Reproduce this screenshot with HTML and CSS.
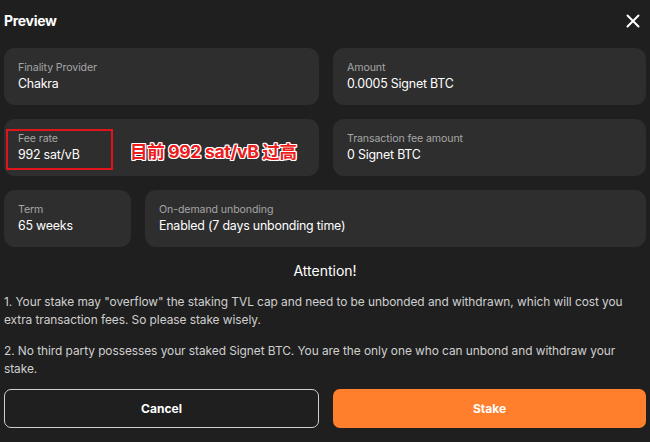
FILE: index.html
```html
<!DOCTYPE html>
<html lang="en">
<head>
<meta charset="utf-8">
<link rel="stylesheet" href="styles.css">
</head>
<body>
<div class="modal">
  <div class="header">
    <h1 class="title">Preview</h1>
    <button class="close" aria-label="Close">
      <svg width="14" height="14" viewBox="0 0 14 14"><path d="M1.5 1.5L12.5 12.5M12.5 1.5L1.5 12.5" stroke="#fff" stroke-width="2" stroke-linecap="round"/></svg>
    </button>
  </div>
  <div class="grid">
    <div class="card"><div class="label">Finality Provider</div><div class="value">Chakra</div></div>
    <div class="card"><div class="label">Amount</div><div class="value">0.0005 Signet BTC</div></div>
    <div class="card fee">
      <div class="label">Fee rate</div><div class="value">992 sat/vB</div>
      <div class="mark"></div>
      <div class="note">目前 992 sat/vB 过高</div>
    </div>
    <div class="card"><div class="label">Transaction fee amount</div><div class="value">0 Signet BTC</div></div>
    <div class="row3">
      <div class="card term"><div class="label">Term</div><div class="value">65 weeks</div></div>
      <div class="card grow"><div class="label">On-demand unbonding</div><div class="value">Enabled (7 days unbonding time)</div></div>
    </div>
  </div>
  <h2 class="attention">Attention!</h2>
  <p class="text">1. Your stake may "overflow" the staking TVL cap and need to be unbonded and withdrawn, which will cost you extra transaction fees. So please stake wisely.</p>
  <p class="text">2. No third party possesses your staked Signet BTC. You are the only one who can unbond and withdraw your stake.</p>
  <div class="actions">
    <button class="btn cancel">Cancel</button>
    <button class="btn stake">Stake</button>
  </div>
</div>
</body>
</html>
```
FILE: styles.css
```css
* { box-sizing: border-box; }
html, body { margin: 0; padding: 0; background: #1f1f1f; }
body { font-family: Inter, "Noto Sans CJK SC", sans-serif; color: #fff; }
.modal { padding: 0 4px; width: 650px; height: 442px; }
.header { height: 40px; display: flex; align-items: center; justify-content: space-between; padding-top: 1px; }
.title { margin: 0; font-size: 14px; font-weight: 700; letter-spacing: -0.3px; }
.close { background: none; border: 0; padding: 0; margin-right: 6px; width: 14px; height: 14px; display: flex; }
.grid { margin-top: 8px; display: grid; grid-template-columns: 315px 313px; column-gap: 14px; row-gap: 14px; }
.card { background: #2e2e2e; border-radius: 11px; height: 57px; padding: 13px 14px 0; position: relative; }
.row3 { grid-column: 1 / 3; display: flex; gap: 14px; }
.term { width: 127px; }
.grow { flex: 1; }
.label { font-size: 10.6px; color: #a6a6a6; line-height: 14px; letter-spacing: -0.1px; }
.value { font-size: 12.4px; line-height: 18px; margin-top: 0; color: #fff; letter-spacing: -0.2px; }
.mark { position: absolute; left: 2px; top: 10px; width: 107px; height: 41px; border: 2.5px solid #e0141a; }
.note { position: absolute; left: 126px; top: 22px; font-size: 17.5px; font-weight: 700; color: #ee1c1c; letter-spacing: -0.3px; text-shadow: 1px 0 0 #fff, -1px 0 0 #fff, 0 1px 0 #fff, 0 -1px 0 #fff, 1px 1px 0 #fff, -1px -1px 0 #fff, 1px -1px 0 #fff, -1px 1px 0 #fff; line-height: 22px; }
.attention { margin: 14px 0 0; text-align: center; font-size: 14px; font-weight: 400; line-height: 20px; }
.text { margin: 12px 0 0; font-size: 11.9px; line-height: 18px; color: #cfcfcf; letter-spacing: -0.05px; }
.text + .text { margin-top: 13px; }
.actions { margin-top: 11px; display: grid; grid-template-columns: 315px 313px; column-gap: 14px; }
.btn { height: 39px; border-radius: 7px; font-family: Inter, sans-serif; font-size: 12px; font-weight: 700; color: #fff; }
.cancel { background: transparent; border: 1.5px solid #cfcfcf; }
.stake { background: #ff7f2c; border: 0; }
```
